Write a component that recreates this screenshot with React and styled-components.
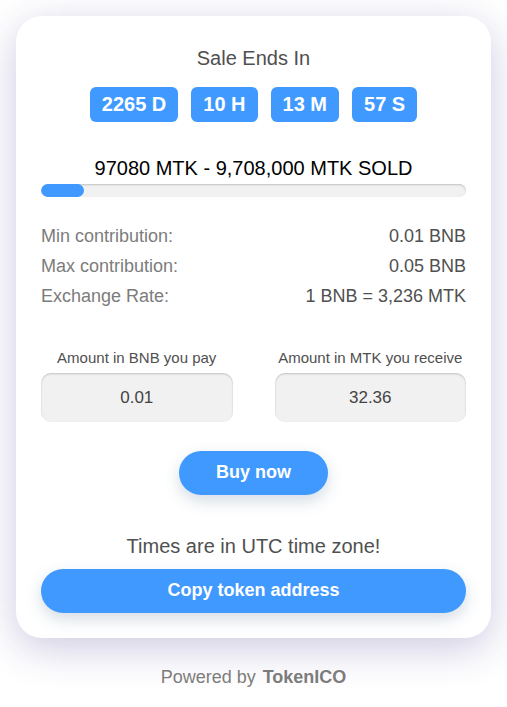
import React, { useState } from "react";
import styled, { createGlobalStyle } from "styled-components";

const GlobalStyle = createGlobalStyle`
  *, *::before, *::after { box-sizing: border-box; }
  body {
    margin: 0;
    background: #fff;
    color: #505050;
    font-family: "Liberation Sans", Arial, sans-serif;
  }
`;

const Page = styled.main`
  padding: 16px 16px 18px;
`;

const Card = styled.section`
  display: flex;
  flex-direction: column;
  padding: 28px 25px 25px;
  border-radius: 26px;
  background: #fff;
  box-shadow: 0 10px 40px rgba(46, 28, 130, 0.24);
`;

const Heading = styled.h1`
  margin: 0;
  font-size: 20px;
  line-height: 28px;
  font-weight: 400;
  text-align: center;
`;

const Countdown = styled.div`
  display: flex;
  justify-content: center;
  gap: 13px;
  margin-top: 15px;
`;

const TimeUnit = styled.span`
  padding: 0 12px;
  border-radius: 6px;
  background: #3f99ff;
  color: #fff;
  font-size: 20px;
  line-height: 35px;
  font-weight: 700;
`;

const Sold = styled.div`
  margin-top: 32px;
  color: #000;
  font-size: 20px;
  line-height: 28px;
  text-align: center;
`;

const Track = styled.div`
  height: 13px;
  margin-top: 2px;
  border-radius: 7px;
  background: #f1f1f1;
  box-shadow: inset 0 1px 2px rgba(0, 0, 0, 0.2);
  overflow: hidden;
`;

const Fill = styled.div`
  height: 100%;
  border-radius: 7px;
  background: #3f99ff;
`;

const Details = styled.dl`
  margin: 24px 0 0;
`;

const DetailRow = styled.div`
  display: flex;
  justify-content: space-between;
  font-size: 18px;
  line-height: 30px;
`;

const Term = styled.dt`
  color: #7c7c7c;
`;

const Value = styled.dd`
  margin: 0;
`;

const Amounts = styled.div`
  display: grid;
  grid-template-columns: 1fr 1fr;
  gap: 42px;
  margin-top: 37px;
`;

const Field = styled.div`
  display: flex;
  flex-direction: column;
  align-items: center;
  gap: 5px;
  min-width: 0;
`;

const FieldLabel = styled.label`
  font-size: 15px;
  line-height: 20px;
  white-space: nowrap;
`;

const AmountInput = styled.input`
  width: 100%;
  height: 49px;
  padding: 0 12px;
  border: 0;
  border-radius: 10px;
  background: #f1f1f1;
  box-shadow: inset 0 1px 2px rgba(0, 0, 0, 0.2);
  color: #444;
  font: 17px "Liberation Sans", Arial, sans-serif;
  text-align: center;
`;

const Button = styled.button`
  align-self: ${({ $wide }) => ($wide ? "stretch" : "center")};
  height: 44px;
  margin-top: ${({ $wide }) => ($wide ? "9px" : "29px")};
  padding: 0 37px 2px;
  border: 0;
  border-radius: 22px;
  background: #3f99ff;
  box-shadow: 0 6px 16px rgba(40, 80, 120, 0.2);
  color: #fff;
  font: 700 18px "Liberation Sans", Arial, sans-serif;
  cursor: pointer;
`;

const Notice = styled.p`
  margin: 37px 0 0;
  font-size: 20px;
  line-height: 28px;
  text-align: center;
`;

const Footer = styled.footer`
  margin-top: 27px;
  color: #7c7c7c;
  font-size: 18px;
  line-height: 24px;
  text-align: center;
`;

const Brand = styled.a`
  margin-left: 2px;
  color: inherit;
  font-weight: 700;
  text-decoration: none;
`;

const time = ["2265 D", "10 H", "13 M", "57 S"];
const details = [
  ["Min contribution:", "0.01 BNB"],
  ["Max contribution:", "0.05 BNB"],
  ["Exchange Rate:", "1 BNB = 3,236 MTK"],
];
const progress = 10;

export default function App() {
  const [pay, setPay] = useState("0.01");
  const [receive, setReceive] = useState("32.36");

  return (
    <>
      <GlobalStyle />
      <Page>
        <Card>
          <Heading>Sale Ends In</Heading>
          <Countdown>
            {time.map((unit) => (
              <TimeUnit key={unit}>{unit}</TimeUnit>
            ))}
          </Countdown>
          <Sold id="sold">97080 MTK - 9,708,000 MTK SOLD</Sold>
          <Track role="progressbar" aria-labelledby="sold" aria-valuenow={progress}>
            <Fill style={{ width: `${progress}%` }} />
          </Track>
          <Details>
            {details.map(([term, value]) => (
              <DetailRow key={term}>
                <Term>{term}</Term>
                <Value>{value}</Value>
              </DetailRow>
            ))}
          </Details>
          <Amounts>
            <Field>
              <FieldLabel htmlFor="pay">Amount in BNB you pay</FieldLabel>
              <AmountInput id="pay" value={pay} onChange={(e) => setPay(e.target.value)} />
            </Field>
            <Field>
              <FieldLabel htmlFor="receive">Amount in MTK you receive</FieldLabel>
              <AmountInput id="receive" value={receive} onChange={(e) => setReceive(e.target.value)} />
            </Field>
          </Amounts>
          <Button type="button">Buy now</Button>
          <Notice>Times are in UTC time zone!</Notice>
          <Button type="button" $wide>Copy token address</Button>
        </Card>
        <Footer>
          Powered by <Brand href="#">TokenICO</Brand>
        </Footer>
      </Page>
    </>
  );
}
